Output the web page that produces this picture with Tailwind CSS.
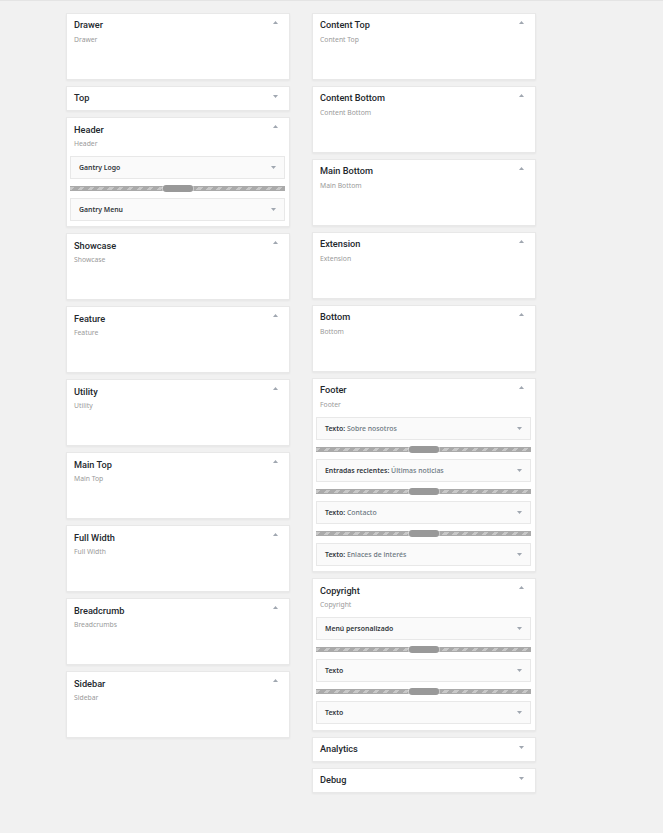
<!DOCTYPE html>
<html><head><meta charset="utf-8"><script src="https://cdn.jsdelivr.net/npm/@tailwindcss/browser@4"></script></head>
<body class="bg-[#f1f1f1] font-['Noto_Sans','Open_Sans',sans-serif]">
<div class="h-[833px] w-[663px] overflow-hidden border-t border-[#e4e4e4] pt-3 pl-[66px] flex items-start gap-[22px]">

<div class="w-[224px] flex flex-col gap-[6px]">
<section class="h-[67px] bg-white border border-[#e8e8e8] shadow-xs relative pl-[7px] pt-1"><h3 class="font-['Roboto'] text-[9.2px] leading-[14px] font-medium text-[#23282d]">Drawer</h3><p class="text-[6.8px] leading-[10px] mt-[3px] text-[#999]">Drawer</p><svg class="absolute right-[11px] top-[7px] w-[5px] h-[3px] fill-[#a0a7b0]" viewBox="0 0 5 3"><path d="M2.5 0 5 3H0z"/></svg></section>
<section class="h-[25px] bg-white border border-[#e8e8e8] shadow-xs relative pl-[7px] pt-1"><h3 class="font-['Roboto'] text-[9.2px] leading-[14px] font-medium text-[#23282d]">Top</h3><svg class="absolute right-[11px] top-[8px] w-[5px] h-[3px] fill-[#a0a7b0]" viewBox="0 0 5 3"><path d="M0 0H5L2.5 3z"/></svg></section>
<section class="bg-white border border-[#e8e8e8] shadow-xs relative pl-[3px] pr-1 pb-[5px] pt-[5px]"><h3 class="pl-1 font-['Roboto'] text-[9.2px] leading-[14px] font-medium text-[#23282d]">Header</h3><p class="pl-1 text-[6.8px] leading-[10px] mt-[2px] text-[#999]">Header</p><svg class="absolute right-[11px] top-[7px] w-[5px] h-[3px] fill-[#a0a7b0]" viewBox="0 0 5 3"><path d="M2.5 0 5 3H0z"/></svg>
<div class="mt-[7px] h-[23px] border border-[#e8e8e8] bg-[#fafafa] flex items-center justify-between pl-2 pr-[8px] text-[6.9px] font-semibold text-[#32373c]"><span class="mt-[2px]">Gantry Logo</span><svg class="w-[5px] h-[3px] fill-[#a0a7b0]" viewBox="0 0 5 3"><path d="M0 0H5L2.5 3z"/></svg></div>
<div class="h-[19px] flex items-center justify-center relative"><div class="h-[5px] w-full border-y border-[#aaa] bg-[repeating-linear-gradient(-45deg,#aaa_0_4px,#c8c8c8_4px_7px)]"></div><div class="absolute h-[7px] w-[30px] rounded-[3px] bg-[#999] ring-1 ring-white/40"></div></div>
<div class="h-[23px] border border-[#e8e8e8] bg-[#fafafa] flex items-center justify-between pl-2 pr-[8px] text-[6.9px] font-semibold text-[#32373c]"><span class="mt-[2px]">Gantry Menu</span><svg class="w-[5px] h-[3px] fill-[#a0a7b0]" viewBox="0 0 5 3"><path d="M0 0H5L2.5 3z"/></svg></div>
</section>
<section class="h-[67px] bg-white border border-[#e8e8e8] shadow-xs relative pl-[7px] pt-[5px]"><h3 class="font-['Roboto'] text-[9.2px] leading-[14px] font-medium text-[#23282d]">Showcase</h3><p class="text-[6.8px] leading-[10px] mt-[2px] text-[#999]">Showcase</p><svg class="absolute right-[11px] top-[7px] w-[5px] h-[3px] fill-[#a0a7b0]" viewBox="0 0 5 3"><path d="M2.5 0 5 3H0z"/></svg></section>
<section class="h-[67px] bg-white border border-[#e8e8e8] shadow-xs relative pl-[7px] pt-[5px]"><h3 class="font-['Roboto'] text-[9.2px] leading-[14px] font-medium text-[#23282d]">Feature</h3><p class="text-[6.8px] leading-[10px] mt-[2px] text-[#999]">Feature</p><svg class="absolute right-[11px] top-[7px] w-[5px] h-[3px] fill-[#a0a7b0]" viewBox="0 0 5 3"><path d="M2.5 0 5 3H0z"/></svg></section>
<section class="h-[67px] bg-white border border-[#e8e8e8] shadow-xs relative pl-[7px] pt-[5px]"><h3 class="font-['Roboto'] text-[9.2px] leading-[14px] font-medium text-[#23282d]">Utility</h3><p class="text-[6.8px] leading-[10px] mt-[2px] text-[#999]">Utility</p><svg class="absolute right-[11px] top-[7px] w-[5px] h-[3px] fill-[#a0a7b0]" viewBox="0 0 5 3"><path d="M2.5 0 5 3H0z"/></svg></section>
<section class="h-[67px] bg-white border border-[#e8e8e8] shadow-xs relative pl-[7px] pt-[5px]"><h3 class="font-['Roboto'] text-[9.2px] leading-[14px] font-medium text-[#23282d]">Main Top</h3><p class="text-[6.8px] leading-[10px] mt-[2px] text-[#999]">Main Top</p><svg class="absolute right-[11px] top-[7px] w-[5px] h-[3px] fill-[#a0a7b0]" viewBox="0 0 5 3"><path d="M2.5 0 5 3H0z"/></svg></section>
<section class="h-[67px] bg-white border border-[#e8e8e8] shadow-xs relative pl-[7px] pt-[5px]"><h3 class="font-['Roboto'] text-[9.2px] leading-[14px] font-medium text-[#23282d]">Full Width</h3><p class="text-[6.8px] leading-[10px] mt-[2px] text-[#999]">Full Width</p><svg class="absolute right-[11px] top-[7px] w-[5px] h-[3px] fill-[#a0a7b0]" viewBox="0 0 5 3"><path d="M2.5 0 5 3H0z"/></svg></section>
<section class="h-[67px] bg-white border border-[#e8e8e8] shadow-xs relative pl-[7px] pt-[5px]"><h3 class="font-['Roboto'] text-[9.2px] leading-[14px] font-medium text-[#23282d]">Breadcrumb</h3><p class="text-[6.8px] leading-[10px] mt-[2px] text-[#999]">Breadcrumbs</p><svg class="absolute right-[11px] top-[7px] w-[5px] h-[3px] fill-[#a0a7b0]" viewBox="0 0 5 3"><path d="M2.5 0 5 3H0z"/></svg></section>
<section class="h-[67px] bg-white border border-[#e8e8e8] shadow-xs relative pl-[7px] pt-[5px]"><h3 class="font-['Roboto'] text-[9.2px] leading-[14px] font-medium text-[#23282d]">Sidebar</h3><p class="text-[6.8px] leading-[10px] mt-[2px] text-[#999]">Sidebar</p><svg class="absolute right-[11px] top-[7px] w-[5px] h-[3px] fill-[#a0a7b0]" viewBox="0 0 5 3"><path d="M2.5 0 5 3H0z"/></svg></section>
</div>

<div class="w-[224px] flex flex-col gap-[6px]">
<section class="h-[67px] bg-white border border-[#e8e8e8] shadow-xs relative pl-[7px] pt-1"><h3 class="font-['Roboto'] text-[9.2px] leading-[14px] font-medium text-[#23282d]">Content Top</h3><p class="text-[6.8px] leading-[10px] mt-[3px] text-[#999]">Content Top</p><svg class="absolute right-[11px] top-[7px] w-[5px] h-[3px] fill-[#a0a7b0]" viewBox="0 0 5 3"><path d="M2.5 0 5 3H0z"/></svg></section>
<section class="h-[67px] bg-white border border-[#e8e8e8] shadow-xs relative pl-[7px] pt-1"><h3 class="font-['Roboto'] text-[9.2px] leading-[14px] font-medium text-[#23282d]">Content Bottom</h3><p class="text-[6.8px] leading-[10px] mt-[3px] text-[#999]">Content Bottom</p><svg class="absolute right-[11px] top-[7px] w-[5px] h-[3px] fill-[#a0a7b0]" viewBox="0 0 5 3"><path d="M2.5 0 5 3H0z"/></svg></section>
<section class="h-[67px] bg-white border border-[#e8e8e8] shadow-xs relative pl-[7px] pt-1"><h3 class="font-['Roboto'] text-[9.2px] leading-[14px] font-medium text-[#23282d]">Main Bottom</h3><p class="text-[6.8px] leading-[10px] mt-[3px] text-[#999]">Main Bottom</p><svg class="absolute right-[11px] top-[7px] w-[5px] h-[3px] fill-[#a0a7b0]" viewBox="0 0 5 3"><path d="M2.5 0 5 3H0z"/></svg></section>
<section class="h-[67px] bg-white border border-[#e8e8e8] shadow-xs relative pl-[7px] pt-1"><h3 class="font-['Roboto'] text-[9.2px] leading-[14px] font-medium text-[#23282d]">Extension</h3><p class="text-[6.8px] leading-[10px] mt-[3px] text-[#999]">Extension</p><svg class="absolute right-[11px] top-[7px] w-[5px] h-[3px] fill-[#a0a7b0]" viewBox="0 0 5 3"><path d="M2.5 0 5 3H0z"/></svg></section>
<section class="h-[67px] bg-white border border-[#e8e8e8] shadow-xs relative pl-[7px] pt-1"><h3 class="font-['Roboto'] text-[9.2px] leading-[14px] font-medium text-[#23282d]">Bottom</h3><p class="text-[6.8px] leading-[10px] mt-[3px] text-[#999]">Bottom</p><svg class="absolute right-[11px] top-[7px] w-[5px] h-[3px] fill-[#a0a7b0]" viewBox="0 0 5 3"><path d="M2.5 0 5 3H0z"/></svg></section>

<section class="bg-white border border-[#e8e8e8] shadow-xs relative pl-[3px] pr-1 pb-[5px] pt-1"><h3 class="pl-1 font-['Roboto'] text-[9.2px] leading-[14px] font-medium text-[#23282d]">Footer</h3><p class="pl-1 text-[6.8px] leading-[10px] mt-[3px] text-[#999]">Footer</p><svg class="absolute right-[11px] top-[7px] w-[5px] h-[3px] fill-[#a0a7b0]" viewBox="0 0 5 3"><path d="M2.5 0 5 3H0z"/></svg>
<div class="mt-[7px] h-[23px] border border-[#e8e8e8] bg-[#fafafa] flex items-center justify-between pl-2 pr-[8px] text-[6.9px] font-semibold text-[#32373c]"><span class="mt-[2px]">Texto: <span class="font-medium text-[#6b7680]">Sobre nosotros</span></span><svg class="w-[5px] h-[3px] fill-[#a0a7b0]" viewBox="0 0 5 3"><path d="M0 0H5L2.5 3z"/></svg></div>
<div class="h-[19px] flex items-center justify-center relative"><div class="h-[5px] w-full border-y border-[#aaa] bg-[repeating-linear-gradient(-45deg,#aaa_0_4px,#c8c8c8_4px_7px)]"></div><div class="absolute h-[7px] w-[30px] rounded-[3px] bg-[#999] ring-1 ring-white/40"></div></div>
<div class="h-[23px] border border-[#e8e8e8] bg-[#fafafa] flex items-center justify-between pl-2 pr-[8px] text-[6.9px] font-semibold text-[#32373c]"><span class="mt-[2px]">Entradas recientes: <span class="font-medium text-[#6b7680]">Últimas noticias</span></span><svg class="w-[5px] h-[3px] fill-[#a0a7b0]" viewBox="0 0 5 3"><path d="M0 0H5L2.5 3z"/></svg></div>
<div class="h-[19px] flex items-center justify-center relative"><div class="h-[5px] w-full border-y border-[#aaa] bg-[repeating-linear-gradient(-45deg,#aaa_0_4px,#c8c8c8_4px_7px)]"></div><div class="absolute h-[7px] w-[30px] rounded-[3px] bg-[#999] ring-1 ring-white/40"></div></div>
<div class="h-[23px] border border-[#e8e8e8] bg-[#fafafa] flex items-center justify-between pl-2 pr-[8px] text-[6.9px] font-semibold text-[#32373c]"><span class="mt-[2px]">Texto: <span class="font-medium text-[#6b7680]">Contacto</span></span><svg class="w-[5px] h-[3px] fill-[#a0a7b0]" viewBox="0 0 5 3"><path d="M0 0H5L2.5 3z"/></svg></div>
<div class="h-[19px] flex items-center justify-center relative"><div class="h-[5px] w-full border-y border-[#aaa] bg-[repeating-linear-gradient(-45deg,#aaa_0_4px,#c8c8c8_4px_7px)]"></div><div class="absolute h-[7px] w-[30px] rounded-[3px] bg-[#999] ring-1 ring-white/40"></div></div>
<div class="h-[23px] border border-[#e8e8e8] bg-[#fafafa] flex items-center justify-between pl-2 pr-[8px] text-[6.9px] font-semibold text-[#32373c]"><span class="mt-[2px]">Texto: <span class="font-medium text-[#6b7680]">Enlaces de interés</span></span><svg class="w-[5px] h-[3px] fill-[#a0a7b0]" viewBox="0 0 5 3"><path d="M0 0H5L2.5 3z"/></svg></div>
</section>

<section class="bg-white border border-[#e8e8e8] shadow-xs relative pl-[3px] pr-1 pb-[6px] pt-[5px]"><h3 class="pl-1 font-['Roboto'] text-[9.2px] leading-[14px] font-medium text-[#23282d]">Copyright</h3><p class="pl-1 text-[6.8px] leading-[10px] mt-[2px] text-[#999]">Copyright</p><svg class="absolute right-[11px] top-[7px] w-[5px] h-[3px] fill-[#a0a7b0]" viewBox="0 0 5 3"><path d="M2.5 0 5 3H0z"/></svg>
<div class="mt-[7px] h-[23px] border border-[#e8e8e8] bg-[#fafafa] flex items-center justify-between pl-2 pr-[8px] text-[6.9px] font-semibold text-[#32373c]"><span class="mt-[2px]">Menú personalizado</span><svg class="w-[5px] h-[3px] fill-[#a0a7b0]" viewBox="0 0 5 3"><path d="M0 0H5L2.5 3z"/></svg></div>
<div class="h-[19px] flex items-center justify-center relative"><div class="h-[5px] w-full border-y border-[#aaa] bg-[repeating-linear-gradient(-45deg,#aaa_0_4px,#c8c8c8_4px_7px)]"></div><div class="absolute h-[7px] w-[30px] rounded-[3px] bg-[#999] ring-1 ring-white/40"></div></div>
<div class="h-[23px] border border-[#e8e8e8] bg-[#fafafa] flex items-center justify-between pl-2 pr-[8px] text-[6.9px] font-semibold text-[#32373c]"><span class="mt-[2px]">Texto</span><svg class="w-[5px] h-[3px] fill-[#a0a7b0]" viewBox="0 0 5 3"><path d="M0 0H5L2.5 3z"/></svg></div>
<div class="h-[19px] flex items-center justify-center relative"><div class="h-[5px] w-full border-y border-[#aaa] bg-[repeating-linear-gradient(-45deg,#aaa_0_4px,#c8c8c8_4px_7px)]"></div><div class="absolute h-[7px] w-[30px] rounded-[3px] bg-[#999] ring-1 ring-white/40"></div></div>
<div class="h-[23px] border border-[#e8e8e8] bg-[#fafafa] flex items-center justify-between pl-2 pr-[8px] text-[6.9px] font-semibold text-[#32373c]"><span class="mt-[2px]">Texto</span><svg class="w-[5px] h-[3px] fill-[#a0a7b0]" viewBox="0 0 5 3"><path d="M0 0H5L2.5 3z"/></svg></div>
</section>

<section class="h-[25px] bg-white border border-[#e8e8e8] shadow-xs relative pl-[7px] pt-1"><h3 class="font-['Roboto'] text-[9.2px] leading-[14px] font-medium text-[#23282d]">Analytics</h3><svg class="absolute right-[11px] top-[8px] w-[5px] h-[3px] fill-[#a0a7b0]" viewBox="0 0 5 3"><path d="M0 0H5L2.5 3z"/></svg></section>
<section class="h-[25px] bg-white border border-[#e8e8e8] shadow-xs relative pl-[7px] pt-1"><h3 class="font-['Roboto'] text-[9.2px] leading-[14px] font-medium text-[#23282d]">Debug</h3><svg class="absolute right-[11px] top-[8px] w-[5px] h-[3px] fill-[#a0a7b0]" viewBox="0 0 5 3"><path d="M0 0H5L2.5 3z"/></svg></section>
</div>
</div>
</body></html>
